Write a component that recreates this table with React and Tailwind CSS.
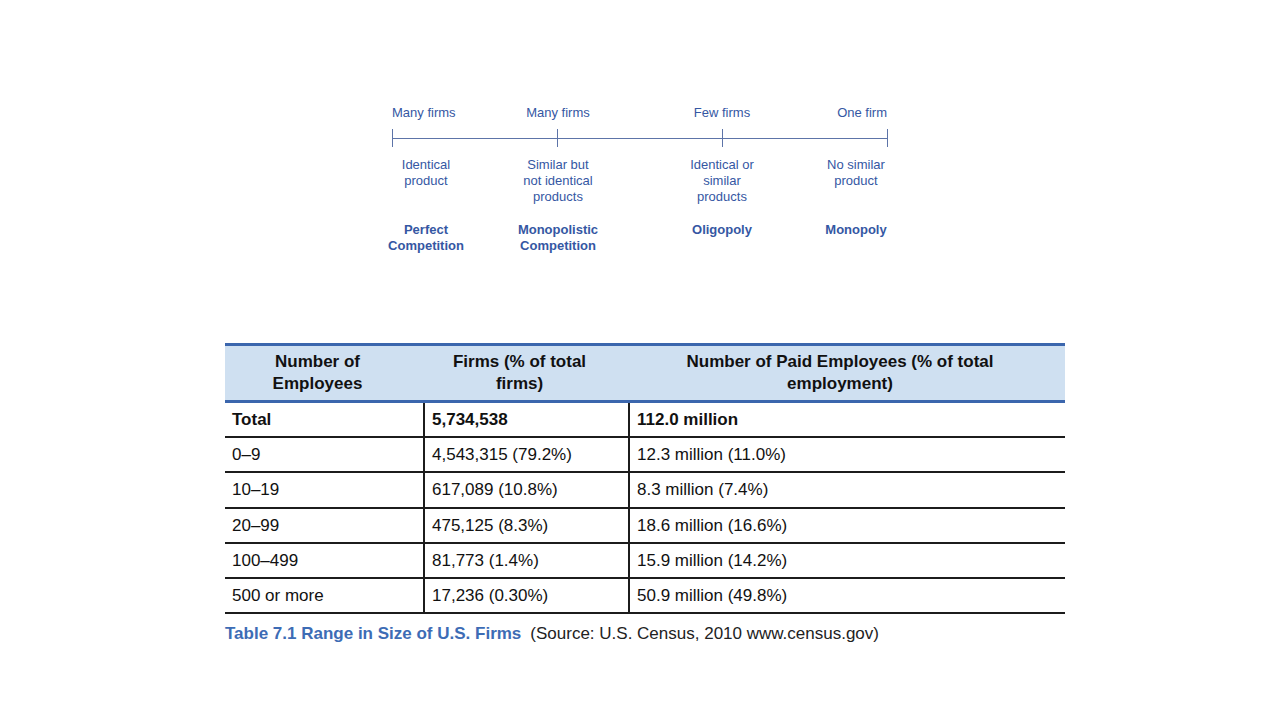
import React from 'react';

const MARKETS = [
  { x: 426, firms: 'Many firms', firmsLeft: 392, product: ['Identical', 'product'], name: ['Perfect', 'Competition'] },
  { x: 558, firms: 'Many firms', product: ['Similar but', 'not identical', 'products'], name: ['Monopolistic', 'Competition'] },
  { x: 722, firms: 'Few firms', product: ['Identical or', 'similar', 'products'], name: ['Oligopoly'] },
  { x: 856, firms: 'One firm', firmsRight: 887, product: ['No similar', 'product'], name: ['Monopoly'] },
];

const ROWS = [
  ['0–9', '4,543,315 (79.2%)', '12.3 million (11.0%)'],
  ['10–19', '617,089 (10.8%)', '8.3 million (7.4%)', true],
  ['20–99', '475,125 (8.3%)', '18.6 million (16.6%)'],
  ['100–499', '81,773 (1.4%)', '15.9 million (14.2%)'],
  ['500 or more', '17,236 (0.30%)', '50.9 million (49.8%)'],
];

function Spectrum() {
  // diagram box spans x 380..900, labels are placed at their column centres
  return (
    <div className="relative w-[520px] h-[160px] ml-[380px] text-[13px] leading-[16px] text-[#3557a3]">
      <svg className="absolute left-0 top-0" width="520" height="160">
        <line x1="12" y1="42.5" x2="507" y2="42.5" stroke="#5d74a8" strokeWidth="1" />
        {[12, 177, 342, 507].map(x => (
          <line key={x} x1={x + 0.5} y1="33" x2={x + 0.5} y2="51" stroke="#5d74a8" strokeWidth="1" />
        ))}
      </svg>
      {MARKETS.map(m => (
        <div key={'f' + m.name[0]} className="absolute top-[9px] whitespace-nowrap"
          style={m.firmsLeft ? { left: m.firmsLeft - 380 } : m.firmsRight ? { right: 900 - m.firmsRight } : { left: m.x - 380 - 65, width: 130, textAlign: 'center' }}>
          {m.firms}
        </div>
      ))}
      {MARKETS.map(m => (
        <div key={m.name[0]} className="absolute top-[61px] w-[130px] text-center" style={{ left: m.x - 380 - 65 }}>
          {m.product.map(l => <div key={l}>{l}</div>)}
        </div>
      ))}
      {MARKETS.map(m => (
        <div key={'n' + m.name[0]} className="absolute top-[126px] w-[130px] text-center font-bold" style={{ left: m.x - 380 - 65 }}>
          {m.name.map(l => <div key={l}>{l}</div>)}
        </div>
      ))}
    </div>
  );
}

export default function App() {
  return (
    <div className="w-[1280px] h-[720px] bg-white overflow-hidden" style={{ fontFamily: '"Liberation Sans", Arial, sans-serif' }}>
      <div className="pt-[96px]">
        <Spectrum />
      </div>
      <div className="ml-[225px] mt-[87px] w-[840px]">
        <table className="w-[840px] border-collapse table-fixed text-[17px] text-[#111]">
          <colgroup>
            <col className="w-[199px]" />
            <col className="w-[205px]" />
            <col className="w-[436px]" />
          </colgroup>
          <thead>
            <tr className="bg-[#cfe0f1] border-t-[3px] border-b-[3px] border-[#3b66ad]">
              <th className="h-[57px] pl-4 pr-[30px] leading-[22px] font-bold text-center">Number of Employees</th>
              <th className="h-[57px] pl-6 pr-[38px] leading-[22px] font-bold text-center">Firms (% of total firms)</th>
              <th className="h-[57px] pl-10 pr-[54px] leading-[22px] font-bold text-center">Number of Paid Employees (% of total employment)</th>
            </tr>
          </thead>
          <tbody>
            <tr className="border-b-2 border-[#1c1c1c] font-bold">
              <td className="h-[35px] pl-[7px]">Total</td>
              <td className="h-[35px] pl-[7px] border-l-2 border-[#1c1c1c]">5,734,538</td>
              <td className="h-[35px] pl-[7px] border-l-2 border-[#1c1c1c]">112.0 million</td>
            </tr>
            {ROWS.map(r => (
              <tr key={r[0]} className={r[3] ? 'h-[36px] border-b-2 border-[#1c1c1c]' : 'h-[35px] border-b-2 border-[#1c1c1c]'}>
                <td className="pl-[7px] pt-px">{r[0]}</td>
                <td className="pl-[7px] pt-px border-l-2 border-[#1c1c1c]">{r[1]}</td>
                <td className="pl-[7px] pt-px border-l-2 border-[#1c1c1c]">{r[2]}</td>
              </tr>
            ))}
          </tbody>
        </table>
        <p className="mt-[9px] text-[17px] leading-[22px] text-[#222]">
          <span className="font-bold text-[#3d6cb5]">Table 7.1 Range in Size of U.S. Firms</span>
          <span className="ml-[9px]">(Source: U.S. Census, 2010 www.census.gov)</span>
        </p>
      </div>
    </div>
  );
}
